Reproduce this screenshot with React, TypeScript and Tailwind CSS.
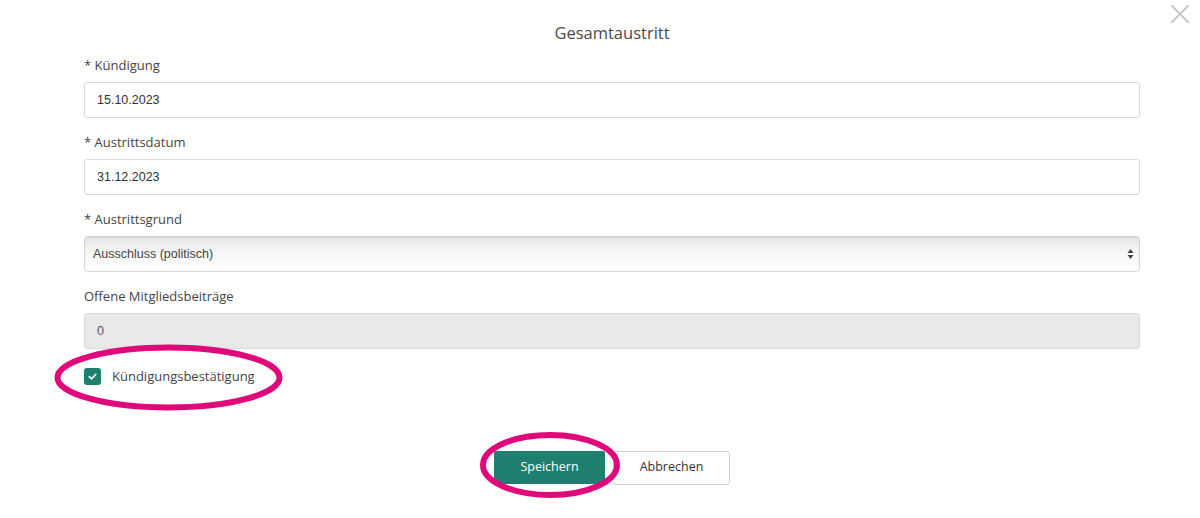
import { X } from "lucide-react";

const LABEL = "block text-[13px] leading-5 text-[#444] mb-[7px]";
const INPUT =
  "w-full h-9 rounded-[3px] border border-[#d9d9d9] px-3 text-[12.5px] text-[#333] outline-none";

function Field({ label, children }: { label: string; children: React.ReactNode }) {
  return (
    <div className="mb-[14px]">
      <label className={LABEL}>{label}</label>
      {children}
    </div>
  );
}

export default function App() {
  return (
    <div
      className="relative w-[1200px] h-[518px] overflow-hidden bg-white"
      style={{ fontFamily: '"Open Sans", "Noto Sans", sans-serif' }}
    >
      <button className="absolute right-[4px] top-[-2px] text-[#c6c6c6]">
        <X size={32} strokeWidth={1.4} />
      </button>

      <div className="pl-[84px] pr-[60px] pt-[21px]">
        <h2 className="text-center text-[16.5px] leading-6 text-[#4a4a4a] mb-[10px]">Gesamtaustritt</h2>

        <Field label="* Kündigung">
          <input
            className={`${INPUT} bg-white`}
            defaultValue="15.10.2023"
            style={{ fontFamily: '"Liberation Sans", Arial, sans-serif' }}
          />
        </Field>

        <Field label="* Austrittsdatum">
          <input
            className={`${INPUT} bg-white`}
            defaultValue="31.12.2023"
            style={{ fontFamily: '"Liberation Sans", Arial, sans-serif' }}
          />
        </Field>

        <Field label="* Austrittsgrund">
          <div
            className="relative h-9 w-full rounded-[4px] border border-[#d4d4d4] bg-gradient-to-b from-[#e6e6e6] via-[#f7f7f7] to-white shadow-[inset_0_1px_1px_rgba(0,0,0,0.08)] flex items-center pl-[8px] text-[12.5px] text-[#444]"
            style={{ fontFamily: '"Liberation Sans", Arial, sans-serif' }}
          >
            Ausschluss (politisch)
            <svg className="absolute right-[5px] top-1/2 -translate-y-1/2" width="7" height="11" viewBox="0 0 7 11">
              <path d="M3.5 0.5 L6.5 4.5 L0.5 4.5 Z" fill="#444" />
              <path d="M3.5 10.5 L6.5 6.5 L0.5 6.5 Z" fill="#444" />
            </svg>
          </div>
        </Field>

        <Field label="Offene Mitgliedsbeiträge">
          <div
            className="flex h-9 w-full items-center rounded-[3px] border border-[#d9d9d9] bg-[#e9e9e9] px-3 text-[12.5px] text-[#555]"
            style={{ fontFamily: '"Liberation Sans", Arial, sans-serif' }}
          >
            0
          </div>
        </Field>

        <div className="flex items-center gap-[11px] mt-[18px]">
          <span className="flex h-[17px] w-[17px] items-center justify-center rounded-[3px] bg-[#1e7f6e]">
            <svg width="11" height="11" viewBox="0 0 12 12">
              <path d="M2.5 6.2 L5 8.6 L9.6 3.6" fill="none" stroke="white" strokeWidth="1.8" strokeLinecap="round" strokeLinejoin="round" />
            </svg>
          </span>
          <span className="text-[13px] text-[#444]">Kündigungsbestätigung</span>
        </div>
      </div>

      <div className="flex justify-center gap-2 mt-[64px] pl-[24px]">
        <button className="h-[33px] w-[111px] rounded-[2px] bg-[#1e7f6e] text-[12.5px] text-white">Speichern</button>
        <button className="h-[34px] w-[117px] rounded-[3px] border border-[#cfcfcf] bg-white text-[12.5px] text-[#333]">
          Abbrechen
        </button>
      </div>

      {/* annotation ellipses */}
      <svg className="absolute left-0 top-0 pointer-events-none" width="1200" height="518">
        <ellipse cx="168.5" cy="377.5" rx="111" ry="30" fill="none" stroke="#e0097c" strokeWidth="6" />
        <ellipse cx="550" cy="465" rx="67" ry="30" fill="none" stroke="#e0097c" strokeWidth="6" />
      </svg>
    </div>
  );
}
